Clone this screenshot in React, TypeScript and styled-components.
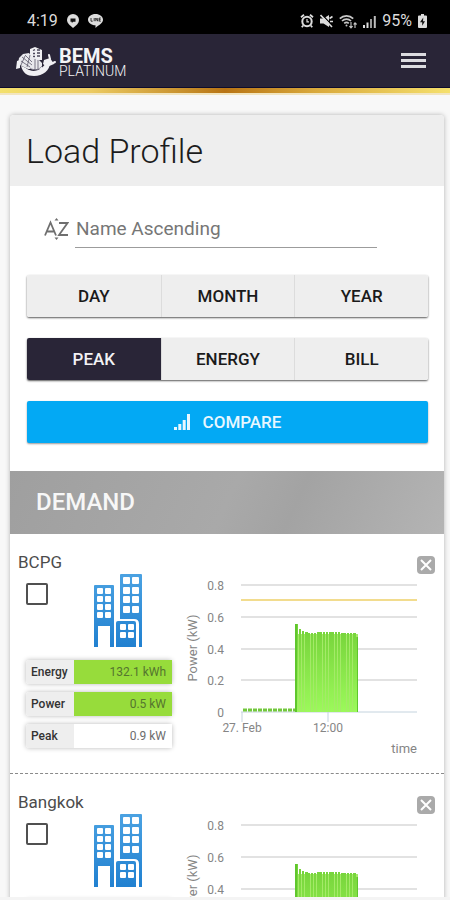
import React, { useId, useState } from 'react';
import styled, { createGlobalStyle } from 'styled-components';

const GlobalStyle = createGlobalStyle`
  *, *::before, *::after { box-sizing: border-box; }
  body { margin: 0; background: #f8f8f8; font-family: Roboto, "Liberation Sans", sans-serif; }
  button, select, input { font-family: inherit; }
`;

const Screen = styled.div`
  display: flex;
  flex-direction: column;
  height: 100vh;
  border-bottom: 3px solid #f4f4f4;
`;

const StatusBar = styled.div`
  display: flex;
  flex: none;
  justify-content: space-between;
  align-items: center;
  height: 34px;
  padding: 8px 23px 0 27px;
  background: #000;
  color: #dcdcdc;
  font-size: 16px;
  line-height: 20px;
`;

const StatusGroup = styled.div<{ $gap: number }>`
  display: flex;
  align-items: center;
  gap: ${(p) => p.$gap}px;
`;

const AppBar = styled.header`
  display: flex;
  flex: none;
  justify-content: space-between;
  align-items: center;
  height: 54px;
  padding: 0 24px 0 16px;
  background: #292537;
  border-bottom: 1px solid #0d0c2c;
`;

const GoldRule = styled.div`
  flex: none;
  height: 7px;
  background: linear-gradient(to right, #f3e06c 0%, #eccb62 20%, #c48a27 43%, #b87414 50%, #d9a93c 70%, #f5e06c 100%);
  border-bottom: 2px solid #f2e5bf;
`;

const Brand = styled.a`
  display: flex;
  align-items: center;
  gap: 3px;
  color: #f4f4f6;
  text-decoration: none;
`;

const BrandText = styled.span`
  display: flex;
  flex-direction: column;
  padding-top: 4px;
`;

const BrandName = styled.span`
  font-size: 20px;
  line-height: 16px;
  font-weight: 700;
`;

const BrandTier = styled.span`
  font-size: 14px;
  line-height: 14px;
  font-weight: 300;
`;

const MenuButton = styled.button`
  display: grid;
  gap: 3px;
  width: 25px;
  padding: 0;
  border: 0;
  background: none;
  cursor: pointer;
`;

const MenuLine = styled.span`
  height: 3px;
  background: #dcdce0;
`;

const Content = styled.main`
  flex: 1;
  min-height: 0;
  overflow-y: auto;
  scrollbar-width: none;
  padding: 20px 6px 20px 10px;
`;

const Card = styled.section`
  background: #fff;
  border-radius: 4px 4px 0 0;
  box-shadow: 0 0 5px rgba(0, 0, 0, 0.28);
`;

const CardTitle = styled.h1`
  margin: 0;
  padding: 16px 16px 15px;
  background: #eee;
  border-radius: 4px 4px 0 0;
  color: #1c1c1c;
  font-size: 34px;
  line-height: 40px;
  font-weight: 300;
`;

const Controls = styled.div`
  display: grid;
  gap: 21px;
  padding: 24px 16px 28px 17px;
`;

const SortField = styled.label`
  display: flex;
  align-items: center;
  gap: 6px;
  padding: 0 51px 6px 17px;
`;

const SortSelect = styled.select`
  flex: 1;
  min-width: 0;
  height: 38px;
  padding: 0 1px;
  appearance: none;
  border: 0;
  border-bottom: 1px solid #9c9c9c;
  border-radius: 0;
  background: none;
  color: #767676;
  font-size: 19px;
  outline: none;
`;

const ButtonGroup = styled.div`
  display: grid;
  grid-template-columns: repeat(3, 1fr);
  border-radius: 2px;
  box-shadow: 0 1px 2px rgba(0, 0, 0, 0.65);
`;

const Segment = styled.button<{ $active?: boolean }>`
  height: 42px;
  padding: 0;
  border: 0;
  border-left: 1px solid #dcdcdc;
  background: ${(p) => (p.$active ? '#292537' : '#eee')};
  color: ${(p) => (p.$active ? '#f2f2f4' : '#1a1a1a')};
  font-size: 17px;
  font-weight: 500;
  cursor: pointer;
  &:first-child { border-left: 0; border-radius: 2px 0 0 2px; }
  &:last-child { border-radius: 0 2px 2px 0; }
`;

const CompareButton = styled.button`
  display: flex;
  justify-content: center;
  align-items: center;
  gap: 12px;
  height: 42px;
  border: 0;
  border-radius: 2px;
  background: #03a9f4;
  box-shadow: 0 1px 2px rgba(0, 0, 0, 0.4);
  color: #e8f7ff;
  font-size: 17px;
  font-weight: 500;
  cursor: pointer;
`;

const SectionTitle = styled.h2`
  margin: 0;
  padding: 0 26px;
  background: linear-gradient(115deg, #9f9f9f 0%, #a9a9a9 50%, #a3a3a3 65%, #b4b4b4 100%);
  color: #f7f7f7;
  font-size: 24px;
  line-height: 63px;
  font-weight: 500;
`;

const Site = styled.article`
  display: grid;
  grid-template-columns: 162px 1fr;
  column-gap: 2px;
  align-content: start;
  height: 240px;
  padding: 18px 9px 0 8px;
  border-bottom: 1px dashed #8a8a8a;
`;

const SiteHeader = styled.div`
  display: flex;
  grid-column: 1 / -1;
  justify-content: space-between;
  align-items: flex-start;
  height: 22px;
`;

const SiteName = styled.label`
  color: #4c4c4c;
  font-size: 17px;
  line-height: 20px;
`;

const CloseButton = styled.button`
  display: flex;
  padding: 4px 0 0;
  border: 0;
  background: none;
  cursor: pointer;
`;

const Summary = styled.div`
  padding: 0 8px;
`;

const Picker = styled.div`
  display: flex;
  gap: 46px;
  height: 86px;
`;

const Tick = styled.input`
  appearance: none;
  width: 22px;
  height: 22px;
  margin: 9px 0 0;
  border: 2px solid #505050;
  border-radius: 2px;
  background: #fff;
  &:checked { background: #03a9f4; }
`;

const Readings = styled.dl`
  display: grid;
  gap: 8px;
  margin: 0;
`;

const Reading = styled.div`
  display: grid;
  grid-template-columns: 48px 1fr;
  border-radius: 3px;
  box-shadow: 0 0 5px rgba(0, 0, 0, 0.28);
  line-height: 24px;
`;

const ReadingLabel = styled.dt`
  padding-left: 5px;
  background: #eee;
  border-radius: 3px 0 0 3px;
  color: #333;
  font-size: 12px;
  font-weight: 500;
`;

const ReadingValue = styled.dd<{ $filled: boolean }>`
  margin: 0;
  padding-right: 6px;
  background: ${(p) => (p.$filled ? '#97dc3b' : '#fff')};
  color: ${(p) => (p.$filled ? '#55752f' : '#6c6c6c')};
  font-size: 12px;
  text-align: right;
`;

const ChartFrame = styled.svg`
  display: block;
  width: 100%;
  height: 192px;
  overflow: visible;
`;

const AxisText = styled.text`
  fill: #858585;
  font-size: 12px;
`;

const AxisTitle = styled.text`
  fill: #858585;
  font-size: 13px;
`;

function PinIcon() {
  return (
    <svg width="12" height="14" viewBox="0 0 12 14" aria-hidden="true">
      <path d="M6 0a6 6 0 0 1 6 6c0 3-2.500 5.500-6 8-3-2.500-6-5-6-8a6 6 0 0 1 6-6z" fill="#dcdcdc" />
      <path d="M3.500 4.500h5v3.300H6.300L4.800 9V7.800H3.500z" fill="#111" />
    </svg>
  );
}

function ChatIcon() {
  return (
    <svg width="15" height="14" viewBox="0 0 15 14" aria-hidden="true">
      <path d="M7.500 0C11.700 0 15 2.500 15 5.800S11 11 7.500 14v-2.700C3.200 11 0 8.700 0 5.700S3.300 0 7.500 0z" fill="#dcdcdc" />
      <path d="M3 4v3.200h1.700M6.200 4v3.200M7.800 7.200V4l2 3.200V4M12.800 4h-1.500v3.200h1.500M11.300 5.600h1.300" fill="none" stroke="#222" strokeWidth=".9" />
    </svg>
  );
}

function AlarmIcon() {
  return (
    <svg width="14" height="14" viewBox="0 0 14 14" fill="none" stroke="#dcdcdc" aria-hidden="true">
      <circle cx="7" cy="7.500" r="4.700" strokeWidth="2" />
      <path d="M1 3.200L4 .8M13 3.200L10 .8M3.200 11.500L1.800 13.300M10.800 11.500l1.400 1.800" strokeWidth="1.800" />
      <path d="M7 5v2.800h2" strokeWidth="1.200" />
    </svg>
  );
}

function MutedIcon() {
  return (
    <svg width="13" height="14" viewBox="0 0 13 14" aria-hidden="true">
      <path d="M0 4.500h3.500L9 1v12L3.500 9.500H0z" fill="#dcdcdc" />
      <path d="M1.800.5l11 11.500" stroke="#000" strokeWidth="1.200" />
      <path d="M.5 1l11.500 12M9.500 4.500l3-2M10 7.500h3" stroke="#dcdcdc" strokeWidth="1.600" />
    </svg>
  );
}

function WifiIcon() {
  return (
    <svg width="18" height="15" viewBox="0 0 18 15" fill="none" stroke="#c8c8c8" aria-hidden="true">
      <path d="M.8 4.600a9.500 9.500 0 0 1 13.400 0M3 7a6.500 6.500 0 0 1 9 0M5.200 9.300a3.500 3.500 0 0 1 4.600 0" strokeWidth="1.700" />
      <circle cx="7.500" cy="11.500" r="1" fill="#c8c8c8" stroke="none" />
      <path d="M12 8v6M10.400 12.200l1.600 1.800 1.600-1.800M16 14V9M14.600 10.500L16 8.800l1.600 1.700" strokeWidth="1.100" />
    </svg>
  );
}

function SignalIcon() {
  return (
    <svg width="13" height="13" viewBox="0 0 13 13" aria-hidden="true">
      <path d="M0 10h2v3H0zM3.500 7.500h2V13h-2z" fill="#dcdcdc" />
      <path d="M7 4h2v9H7z" fill="#9a9a9a" />
      <path d="M10.800 1h2v12h-2z" fill="#bcbcbc" />
    </svg>
  );
}

function BatteryIcon() {
  return (
    <svg width="9" height="14" viewBox="0 0 9 14" aria-hidden="true">
      <path d="M3 0h3v1.500h2q1 0 1 1V13q0 1-1 1H1q-1 0-1-1V2.500q0-1 1-1h2z" fill="#dcdcdc" />
      <path d="M5.300 3.500L2 8.300h2.200v3.500L7 7.200H5z" fill="#111" />
    </svg>
  );
}

function LogoIcon() {
  return (
    <svg width="40" height="30" viewBox="0 0 40 30" aria-hidden="true">
      <path d="M14 3l5-2 7 3v10h-6l-6 3z" fill="#f0f0f3" />
      <path d="M17 4.500l2-.8M21 4h3M17 7.500h2M21 7h3M17 10.500h2M21 10h3" stroke="#4a465a" strokeWidth="1.300" />
      <path d="M3 12l4-4 6-1 3 4 6 2 4 4v6H12L6 20 2 18z" fill="#e9e9ed" />
      <path d="M6 11l10 8M5 15l9 6M9 9l7 7M14 9l-3 12M19 13v10M22 14v10M9 10l-4 9" stroke="#4a465a" strokeWidth=".7" />
      <path d="M1 15l3-1v8l-4 1zM5 20c5 1 7 5 13 5 6-1 10-4 12-9l4 1c0 7-7 13-16 13C11 30 7 27 5 20z" fill="#f0f0f3" />
      <path d="M28 14l6-2 4 6-7 3-4-3z" fill="#f0f0f3" />
      <path d="M34 13l-1-4M37 17l2-1" stroke="#f0f0f3" strokeWidth="2" strokeLinecap="round" />
      <path d="M14 22c4 3 9 2 12-2" fill="none" stroke="#8c8998" strokeWidth="1" />
    </svg>
  );
}

function SortIcon() {
  return (
    <svg width="25" height="24" viewBox="0 0 25 24" fill="none" stroke="#6f6f6f" strokeWidth="1.800" aria-hidden="true">
      <path d="M1 18.500L6.500 5.500l5.500 13M3 14.500h7.500M15 6h8.500L15 18h9" />
      <path d="M10.500 3.500l2-2.500 2 2.500zM10.500 20.500l2 2.500 2-2.500z" fill="#6f6f6f" stroke="none" />
    </svg>
  );
}

function BarsIcon() {
  return (
    <svg width="17" height="18" viewBox="0 0 17 18" fill="#e8f7ff" aria-hidden="true">
      <path d="M0 14h3v3H0zM4.300 11h3v6h-3zM8.700 7h3v10h-3zM13 1h3v16h-3z" />
    </svg>
  );
}

const towerWindows = [
  [3, 14], [11, 14], [3, 22], [11, 22], [3, 30], [11, 30], [3, 38], [11, 38],
];
const tallWindows = [
  [29, 3], [38, 3], [29, 13], [38, 13], [29, 22], [38, 22], [29, 32], [38, 32],
];
const annexWindows = [
  [26, 50], [34, 50], [26, 58], [34, 58],
];

function BuildingsIcon() {
  const fillId = useId();
  return (
    <svg width="48" height="74" viewBox="0 0 48 74" aria-hidden="true">
      <defs>
        <linearGradient id={fillId} x1="0" y1="0" x2="0" y2="74" gradientUnits="userSpaceOnUse">
          <stop offset="0" stopColor="#4ba2e2" />
          <stop offset="1" stopColor="#2080d0" />
        </linearGradient>
      </defs>
      <g fill={`url(#${fillId})`}>
        <path d="M1 11h18q1 0 1 1v61h-4V52H4v21H0V12q0-1 1-1z" />
        <path d="M27 0h20q1 0 1 1v72h-3V50q0-5-5-5H26V1q0-1 1-1z" />
        <path d="M24 47h16q2 0 2 2v24H22V49q0-2 2-2z" />
      </g>
      <g fill="#fff">
        {towerWindows.map(([x, y]) => <rect key={`${x}-${y}`} x={x} y={y} width="6" height="6" rx="1" />)}
        {tallWindows.map(([x, y]) => <rect key={`${x}-${y}`} x={x} y={y} width="7" height="7" rx="1" />)}
        {annexWindows.map(([x, y]) => <rect key={`${x}-${y}`} x={x} y={y} width="6" height="6" rx="1" />)}
      </g>
    </svg>
  );
}

function CloseIcon() {
  return (
    <svg width="18" height="18" viewBox="0 0 18 18" aria-hidden="true">
      <rect width="18" height="18" rx="4" fill="#aaa" />
      <path d="M4 4l10 10M14 4L4 14" stroke="#fff" strokeWidth="2" />
    </svg>
  );
}

const gridLines = [
  { y: 11, label: '0.8' },
  { y: 43, label: '0.6' },
  { y: 75, label: '0.4' },
  { y: 106, label: '0.2' },
];
const barHeights = [88, 83, 81, 80, 79, 79, 79, 80, 80, 80, 80, 80, 80, 80, 80, 79, 79, 79, 79, 79, 75];

function PowerChart({ showLimit }: { showLimit: boolean }) {
  const fillId = useId();
  return (
    <ChartFrame viewBox="0 0 253 192" preserveAspectRatio="xMinYMin meet" role="img" aria-label="Power over time">
      <defs>
        <linearGradient id={fillId} x1="0" y1="50" x2="0" y2="138" gradientUnits="userSpaceOnUse">
          <stop offset="0" stopColor="#74d138" />
          <stop offset="1" stopColor="#9cf95b" />
        </linearGradient>
      </defs>
      {gridLines.map(({ y, label }) => (
        <g key={label}>
          <path d={`M59 ${y}H235`} stroke="#e2e2e2" strokeWidth="2" />
          <AxisText x="42" y={y + 5} textAnchor="end">{label}</AxisText>
        </g>
      ))}
      {showLimit && <path d="M59 26H235" stroke="#f2dc8e" strokeWidth="2" />}
      <path d="M59 138H235M60 138v10M146 138v10" stroke="#c4d3de" strokeWidth="1" fill="none" />
      <path d="M61 136H115" stroke="#72c83c" strokeWidth="3" strokeDasharray="4 1" />
      <rect x="114" y="60" width="62" height="78" fill="#a4ea68" />
      {barHeights.map((h, i) => (
        <rect key={i} x={114 + i * 3} y={138 - h} width={i % 4 === 3 ? 3 : 2} height={h} fill={`url(#${fillId})`} />
      ))}
      <path d="M113 50h2v88h-2zM175 63h1v75h-1z" fill="#5fc62d" />
      <AxisText x="42" y="143" textAnchor="end">0</AxisText>
      <AxisText x="60" y="158" textAnchor="middle">27. Feb</AxisText>
      <AxisText x="146" y="158" textAnchor="middle">12:00</AxisText>
      <AxisTitle x="235" y="179" textAnchor="end">time</AxisTitle>
      <AxisTitle transform="translate(15 74) rotate(-90)" textAnchor="middle">Power (kW)</AxisTitle>
    </ChartFrame>
  );
}

const readings = [
  { label: 'Energy', value: '132.1 kWh', filled: true },
  { label: 'Power', value: '0.5 kW', filled: true },
  { label: 'Peak', value: '0.9 kW', filled: false },
];

function SitePanel({ name, showLimit = false }: { name: string; showLimit?: boolean }) {
  const id = useId();
  return (
    <Site>
      <SiteHeader>
        <SiteName htmlFor={id}>{name}</SiteName>
        <CloseButton type="button" aria-label={`Remove ${name}`}><CloseIcon /></CloseButton>
      </SiteHeader>
      <Summary>
        <Picker>
          <Tick id={id} type="checkbox" />
          <BuildingsIcon />
        </Picker>
        <Readings>
          {readings.map((r) => (
            <Reading key={r.label}>
              <ReadingLabel>{r.label}</ReadingLabel>
              <ReadingValue $filled={r.filled}>{r.value}</ReadingValue>
            </Reading>
          ))}
        </Readings>
      </Summary>
      <PowerChart showLimit={showLimit} />
    </Site>
  );
}

export default function App() {
  const [period, setPeriod] = useState('');
  const [measure, setMeasure] = useState('PEAK');
  return (
    <Screen>
      <GlobalStyle />
      <StatusBar>
        <StatusGroup $gap={9}>
          <span>4:19</span>
          <PinIcon />
          <ChatIcon />
        </StatusGroup>
        <StatusGroup $gap={6}>
          <AlarmIcon />
          <MutedIcon />
          <WifiIcon />
          <SignalIcon />
          <span>95%</span>
          <BatteryIcon />
        </StatusGroup>
      </StatusBar>
      <AppBar>
        <Brand href="#">
          <LogoIcon />
          <BrandText>
            <BrandName>BEMS</BrandName>
            <BrandTier>PLATINUM</BrandTier>
          </BrandText>
        </Brand>
        <MenuButton type="button" aria-label="Menu">
          <MenuLine />
          <MenuLine />
          <MenuLine />
        </MenuButton>
      </AppBar>
      <GoldRule />
      <Content>
        <Card>
          <CardTitle>Load Profile</CardTitle>
          <Controls>
            <SortField>
              <SortIcon />
              <SortSelect aria-label="Sort order" defaultValue="asc">
                <option value="asc">Name Ascending</option>
                <option value="desc">Name Descending</option>
              </SortSelect>
            </SortField>
            <ButtonGroup>
              {['DAY', 'MONTH', 'YEAR'].map((p) => (
                <Segment key={p} type="button" $active={p === period} onClick={() => setPeriod(p)}>{p}</Segment>
              ))}
            </ButtonGroup>
            <ButtonGroup>
              {['PEAK', 'ENERGY', 'BILL'].map((m) => (
                <Segment key={m} type="button" $active={m === measure} onClick={() => setMeasure(m)}>{m}</Segment>
              ))}
            </ButtonGroup>
            <CompareButton type="button">
              <BarsIcon />
              COMPARE
            </CompareButton>
          </Controls>
          <SectionTitle>DEMAND</SectionTitle>
          <SitePanel name="BCPG" showLimit />
          <SitePanel name="Bangkok" />
        </Card>
      </Content>
    </Screen>
  );
}
